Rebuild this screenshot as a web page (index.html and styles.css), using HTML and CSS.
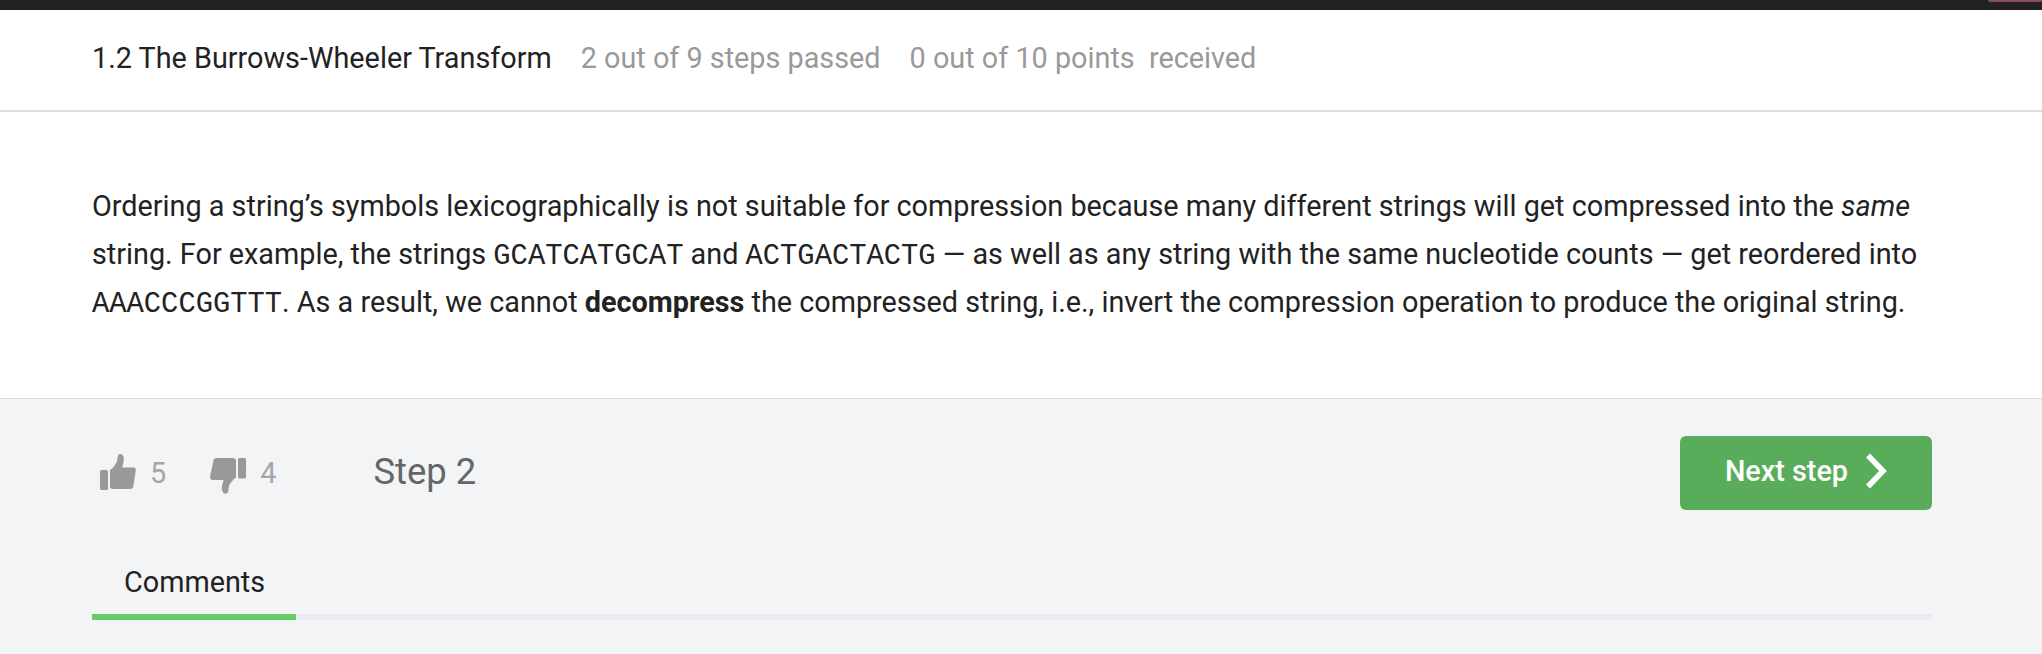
FILE: index.html
```html
<!DOCTYPE html>
<html>
<head>
<meta charset="UTF-8">
<title>1.2 The Burrows-Wheeler Transform</title>
<link rel="stylesheet" href="styles.css">
</head>
<body>
  <div class="topbar">
    <div class="topbar-badge"></div>
  </div>
  <div class="lesson-head">
    <span class="lesson-title">1.2 The Burrows-Wheeler Transform</span>
    <span class="lesson-stat">2 out of 9 steps passed</span>
    <span class="lesson-stat">0 out of 10 points&nbsp; received</span>
  </div>
  <div class="step-text">
    <p>Ordering a string’s symbols lexicographically is not suitable for compression because many different strings will get compressed into the <em>same</em><br>
    string. For example, the strings <code>GCATCATGCAT</code> and <code>ACTGACTACTG</code> — as well as any string with the same nucleotide counts — get reordered into<br>
    <code>AAACCCGGTTT</code>. As a result, we cannot <strong>decompress</strong> the compressed string, i.e., invert the compression operation to produce the original string.</p>
  </div>
  <div class="step-foot">
    <div class="foot-row">
      <div class="vote vote-up">
        <svg class="vote-icon" viewBox="0 0 36 36"><path d="M0 17.500a1.500 1.500 0 0 1 1.500-1.500h5a1.500 1.500 0 0 1 1.500 1.500v17a1.500 1.500 0 0 1-1.500 1.500h-5a1.500 1.500 0 0 1-1.500-1.500zM10 16c3-2 6-6 7-9 .6-2 .4-4 1-5.500.5-1.500 3-2 4.500-.5 1.500 1.500 1.500 4.500 1 7-.3 2-1 4-1 5.500h11c2 0 2.500 2 2.200 3.500l-2.400 15.500c-.3 1.500-1.300 2.500-3 2.500H14c-2 0-2.500-.5-4-1.500z"/></svg>
        <span class="vote-count">5</span>
      </div>
      <div class="vote vote-down">
        <svg class="vote-icon" viewBox="0 0 36 36"><path d="M36 19a1.500 1.500 0 0 1-1.500 1.500h-5a1.500 1.500 0 0 1-1.500-1.500V1.500A1.500 1.500 0 0 1 29.500 0h5A1.500 1.500 0 0 1 36 1.500zM26 19.500c-3 2-6 5.500-7 8.500-.5 2-.3 4-1 6-.5 1.500-3 2.500-4.500 1-1.500-1.500-2-4.500-1.500-7 .3-2 1.500-4 1.500-6H2.500C.5 21.500-.3 20 0 18.500L3.500 2.500C3.800 1 4.800 0 6.500 0H22c2 0 2.500.5 4 1.500z"/></svg>
        <span class="vote-count">4</span>
      </div>
      <div class="step-num">Step 2</div>
      <button class="next-btn">Next step
        <svg class="next-icon" viewBox="0 0 22 36"><path d="M3 2.500l15 15.500L3 33.500" fill="none" stroke="#fff" stroke-width="5.500"/></svg>
      </button>
    </div>
    <div class="tabs">
      <div class="tab">Comments</div>
    </div>
  </div>
</body>
</html>
```

FILE: styles.css
```css
/* General Styles */
body {
    margin: 0;
    overflow: hidden;
    height: 654px;
    background-color: #f3f4f6;
    font-family: 'Roboto', sans-serif;
    color: #222222;
}

.topbar {
    height: 10px;
    background-color: #222222;
    display: flex;
    justify-content: flex-end;
}

.topbar-badge {
    width: 54px;
    height: 2px;
    background-color: #8a4f5a;
    border-radius: 0 0 6px 6px;
}

.lesson-head {
    height: 102px;
    box-sizing: border-box;
    padding: 0 92px 5px;
    display: flex;
    align-items: center;
    gap: 29px;
    background-color: #ffffff;
    border-bottom: 2px solid #dddddd;
    font-size: 28.8px;
}

.lesson-stat {
    color: #999999;
}

.step-text {
    height: 287px;
    box-sizing: border-box;
    padding: 70px 92px 0;
    background-color: #ffffff;
    border-bottom: 1px solid #d8d8d8;
    font-size: 28.8px;
    line-height: 48px;
}

.step-text p {
    margin: 0;
    white-space: nowrap;
}

.step-text code {
    font-family: 'Liberation Mono', monospace;
    line-height: 0;
}

.foot-row {
    display: flex;
    align-items: center;
    padding: 37px 110px 0 100px;
    height: 74px;
}

.vote {
    display: flex;
    align-items: center;
    gap: 14px;
    margin-right: 44px;
}

.vote-icon {
    width: 36px;
    height: 36px;
    fill: #999999;
}

.vote-up .vote-icon {
    margin-bottom: 2px;
}

.vote-down .vote-icon {
    margin-top: 6px;
}

.vote-count {
    font-size: 28.8px;
    color: #a5a5a5;
}

.vote-down {
    margin-right: 97px;
}

.step-num {
    margin-bottom: 4px;
    font-size: 36.4px;
    color: #666666;
}

.next-btn {
    margin-left: auto;
    width: 252px;
    height: 74px;
    padding: 0 0 4px;
    display: flex;
    align-items: center;
    justify-content: center;
    gap: 17px;
    border: none;
    border-radius: 6px;
    background-color: #59ad5a;
    color: #ffffff;
    font-family: 'Roboto', sans-serif;
    font-size: 28.8px;
    font-weight: 500;
}

.next-icon {
    width: 22px;
    height: 36px;
}

.tabs {
    margin: 35px 110px 0 92px;
    border-bottom: 6px solid #e9ebf0;
    height: 69px;
}

.tab {
    width: 204px;
    height: 75px;
    box-sizing: border-box;
    border-bottom: 6px solid #66cc66;
    padding: 9px 0 0 32px;
    font-size: 28.8px;
    line-height: 56px;
}
```
